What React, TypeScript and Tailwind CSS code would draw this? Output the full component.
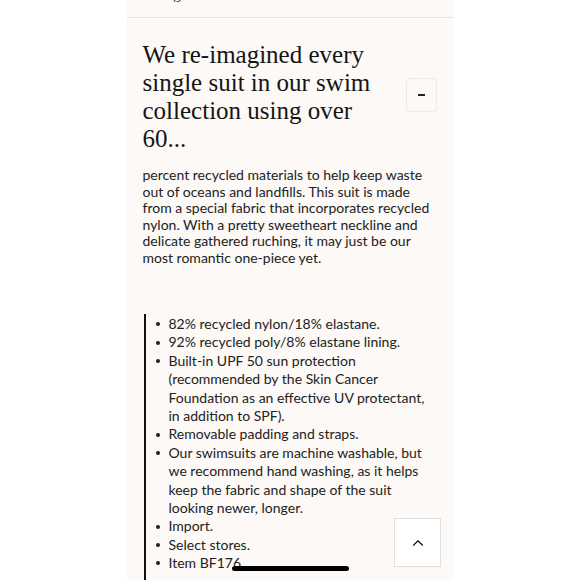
import { ChevronUp } from "lucide-react";

const specs = [
  "82% recycled nylon/18% elastane.",
  "92% recycled poly/8% elastane lining.",
  "Built-in UPF 50 sun protection (recommended by the Skin Cancer Foundation as an effective UV protectant, in addition to SPF).",
  "Removable padding and straps.",
  "Our swimsuits are machine washable, but we recommend hand washing, as it helps keep the fabric and shape of the suit looking newer, longer.",
  "Import.",
  "Select stores.",
  "Item BF176.",
];

export default function App() {
  return (
    <div className="relative h-[580px] w-[580px] overflow-hidden bg-white">
      <div className="mx-auto h-full w-[327px] bg-[#fcf9f6]">
        {/* cut-off line from the previous section */}
        <div className="h-[18px] border-b border-[#e6e2de] overflow-hidden">
          <p className="-mt-[17px] pl-[16px] font-['Liberation_Serif',serif] text-[15px] text-[#222]">
            Sizing
          </p>
        </div>

        <div className="flex items-start justify-between pl-[16px] pr-[17px] pt-[23px]">
          <h2 className="w-[245px] font-['Liberation_Serif',serif] text-[25px] leading-[28px] text-[#151515]">
            We re-imagined every single suit in our swim collection using over 60...
          </h2>
          <button className="mt-[37px] flex h-[34px] w-[31px] items-center justify-center rounded-[4px] border border-[#eeeae6] bg-[#fcf9f6]">
            <span className="block h-[2px] w-[7px] bg-[#222]" />
          </button>
        </div>

        <p className="mt-[14px] w-[310px] pl-[16px] font-['Lato',sans-serif] text-[14px] leading-[16.5px] text-[#222]">
          percent recycled materials to help keep waste out of oceans and landfills. This suit is made from a special fabric that incorporates recycled nylon. With a pretty sweetheart neckline and delicate gathered ruching, it may just be our most romantic one-piece yet.
        </p>

        <ul className="ml-[17px] mt-[48px] h-[300px] border-l-2 border-[#111] pl-[10px] pt-[1px] pr-[26px] font-['Lato',sans-serif] text-[14px] leading-[18.4px] text-[#222]">
          {specs.map((s) => (
            <li key={s} className="flex">
              <span className="flex h-[18.4px] w-[13px] shrink-0 items-center">
                <span className="block h-[4px] w-[4px] rounded-full bg-[#222]" />
              </span>
              <span>{s}</span>
            </li>
          ))}
        </ul>
      </div>

      <button className="absolute left-[394px] top-[518px] flex h-[49px] w-[47px] items-center justify-center border border-[#e2dfdc] bg-white">
        <ChevronUp className="h-[18px] w-[18px] text-[#111]" strokeWidth={1.5} />
      </button>

      <div className="absolute left-[232px] top-[566px] h-[5px] w-[117px] rounded-full bg-black" />
    </div>
  );
}
